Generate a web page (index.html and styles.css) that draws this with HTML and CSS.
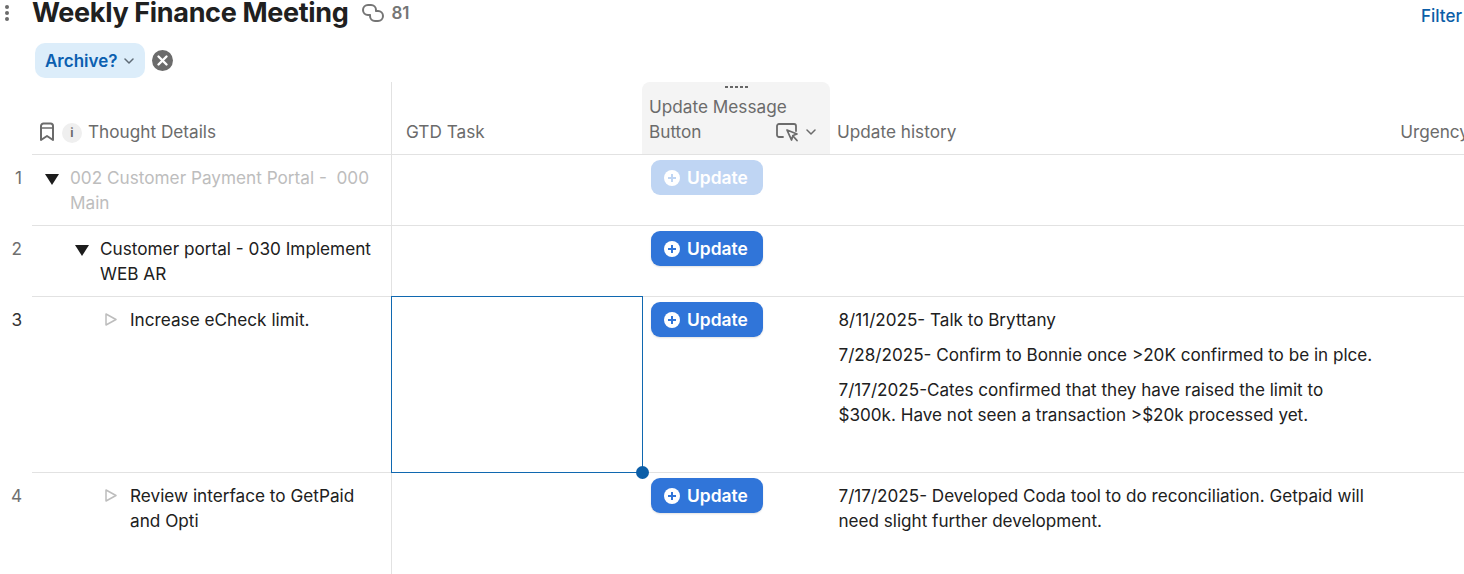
FILE: index.html
```html
<!DOCTYPE html>
<html lang="en">
<head>
<meta charset="utf-8">
<title>Weekly Finance Meeting</title>
<link rel="stylesheet" href="styles.css">
</head>
<body>
<div class="page">
  <header class="title-bar">
    <svg class="dots" width="6" height="20" viewBox="0 0 6 20"><circle cx="3" cy="4" r="2"/><circle cx="3" cy="10" r="2"/><circle cx="3" cy="16" r="2"/></svg>
    <h1 class="title">Weekly Finance Meeting</h1>
    <svg class="link-icon" width="24" height="20" viewBox="0 0 24 20" fill="none" stroke="#757575" stroke-width="2" stroke-linecap="round"><path d="M8.500 12H7a5 5 0 0 1 0-10h3a5 5 0 0 1 5 5v1"/><path d="M15.500 8H17a5 5 0 0 1 0 10h-3a5 5 0 0 1-5-5v-1"/></svg>
    <span class="count">81</span>
    <a class="filter">Filter</a>
  </header>
  <div class="chips">
    <div class="chip">Archive?
      <svg width="10" height="6" viewBox="0 0 10 6" fill="none" stroke="#5f6b76" stroke-width="1.500" stroke-linecap="round" stroke-linejoin="round"><path d="M1 1l4 4 4-4"/></svg>
    </div>
    <svg class="clear" width="21" height="21" viewBox="0 0 21 21"><circle cx="10.500" cy="10.500" r="10.500" fill="#6b6b6b"/><path d="M6.500 6.500l8 8M14.500 6.500l-8 8" stroke="#fff" stroke-width="2.400" stroke-linecap="round"/></svg>
  </div>
  <div class="table">
    <div class="gutter-head"></div>
    <div class="hcell h-first">
      <svg class="bookmark" width="16" height="20" viewBox="0 0 16 20" fill="none" stroke="#6b6b6b" stroke-width="2" stroke-linejoin="round"><path d="M2 4a2.500 2.500 0 0 1 2.500-2.500h7A2.500 2.500 0 0 1 14 4v14l-6-4-6 4z"/><path d="M2 6h12" stroke-width="1.500"/></svg>
      <span class="info">i</span>
      <span>Thought Details</span>
    </div>
    <div class="hcell h-plain">GTD Task</div>
    <div class="hcell h-active">
      <span class="grip"></span>
      <div class="h-active-text">Update Message</div>
      <div class="h-active-row">
        <span>Button</span>
        <span class="h-icons">
          <svg width="24" height="20" viewBox="0 0 24 20" fill="none" stroke="#6b6b6b" stroke-width="1.800" stroke-linejoin="round" stroke-linecap="round"><path d="M7 15H3a2 2 0 0 1-2-2V4a2 2 0 0 1 2-2h15a2 2 0 0 1 2 2v5"/><path d="M11 8l10 4-4 1.500-1.500 4.500z"/><path d="M17 14l4 4.500"/></svg>
          <svg width="10" height="6" viewBox="0 0 10 6" fill="none" stroke="#6b6b6b" stroke-width="1.500" stroke-linecap="round" stroke-linejoin="round"><path d="M1 1l4 4 4-4"/></svg>
        </span>
      </div>
    </div>
    <div class="hcell h-history">Update history<span class="urgency">Urgency</span></div>

    <div class="num">1</div>
    <div class="cell first muted lvl0"><span class="tri"></span><span>002 Customer Payment Portal -&nbsp; 000 Main</span></div>
    <div class="cell"></div>
    <div class="cell btn-cell"><button class="update faded"><svg width="16" height="16" viewBox="0 0 16 16"><circle cx="8" cy="8" r="8" fill="#fff"/><path d="M8 4v8M4 8h8" stroke="#bfd5f3" stroke-width="2"/></svg>Update</button></div>
    <div class="cell wide"></div>

    <div class="num">2</div>
    <div class="cell first lvl1"><span class="tri"></span><span>Customer portal - 030 Implement WEB AR</span></div>
    <div class="cell"></div>
    <div class="cell btn-cell"><button class="update"><svg width="16" height="16" viewBox="0 0 16 16"><circle cx="8" cy="8" r="8" fill="#fff"/><path d="M8 4v8M4 8h8" stroke="#3075d9" stroke-width="2"/></svg>Update</button></div>
    <div class="cell wide"></div>

    <div class="num dark">3</div>
    <div class="cell first lvl2"><svg class="tri-open" width="12" height="13" viewBox="0 0 12 13"><path d="M1 1l10 5.500L1 12z" fill="none" stroke="#bdbdbd" stroke-width="1.500" stroke-linejoin="round"/></svg><span>Increase eCheck limit.</span></div>
    <div class="cell selected"><span class="handle"></span></div>
    <div class="cell btn-cell"><button class="update"><svg width="16" height="16" viewBox="0 0 16 16"><circle cx="8" cy="8" r="8" fill="#fff"/><path d="M8 4v8M4 8h8" stroke="#3075d9" stroke-width="2"/></svg>Update</button></div>
    <div class="cell wide history">
      <p>8/11/2025- Talk to Bryttany</p>
      <p>7/28/2025- Confirm to Bonnie once &gt;20K confirmed to be in plce.</p>
      <p>7/17/2025-Cates confirmed that they have raised the limit to $300k. Have not seen a transaction &gt;$20k processed yet.</p>
    </div>

    <div class="num">4</div>
    <div class="cell first lvl2 last"><svg class="tri-open" width="12" height="13" viewBox="0 0 12 13"><path d="M1 1l10 5.500L1 12z" fill="none" stroke="#bdbdbd" stroke-width="1.500" stroke-linejoin="round"/></svg><span>Review interface to GetPaid and Opti</span></div>
    <div class="cell last"></div>
    <div class="cell btn-cell last"><button class="update"><svg width="16" height="16" viewBox="0 0 16 16"><circle cx="8" cy="8" r="8" fill="#fff"/><path d="M8 4v8M4 8h8" stroke="#3075d9" stroke-width="2"/></svg>Update</button></div>
    <div class="cell wide history last">
      <p>7/17/2025- Developed Coda tool to do reconciliation. Getpaid will need slight further development.</p>
    </div>
  </div>
</div>
</body>
</html>
```
FILE: styles.css
```css
* { box-sizing: border-box; }
html, body { margin: 0; height: 100%; overflow: hidden; background: #fff; }
body { font-family: Inter, "Liberation Sans", sans-serif; font-size: 17.200px; color: #202020; }
.page { width: 1464px; height: 574px; overflow: hidden; }

.title-bar { display: flex; align-items: center; height: 26px; padding-left: 4px; }
.dots { fill: #6b6b6b; flex: none; margin-right: 22px; }
.title { margin: 0; font-size: 27px; line-height: 26px; font-weight: 700; letter-spacing: -0.34px; color: #202020; white-space: nowrap; }
.link-icon { margin-left: 13px; }
.count { margin-left: 6px; font-size: 17px; font-weight: 600; color: #757575; }
.filter { margin-left: auto; margin-right: 2px; padding-top: 6px; color: #0b5ea8; font-size: 17px; font-weight: 500; }

.chips { display: flex; align-items: flex-start; gap: 7px; padding: 17px 0 0 35px; height: 56px; }
.chip { display: flex; align-items: center; gap: 7px; height: 35px; padding: 0 11px 0 10px; background: #dcedfa; border-radius: 10px; color: #0b5fb0; font-weight: 600; font-size: 17px; }
.clear { margin-top: 7px; }

.table { display: grid; grid-template-columns: 32px 360px 250px 188px 1fr; grid-template-rows: 73px 71px 71px 176px 101px; font-size: 17.200px; }
.hcell { display: flex; align-items: flex-end; padding-bottom: 10px; color: #6b6b6b; line-height: 25px; border-bottom: 1px solid #e2e2e2; white-space: nowrap; }
.h-first { border-right: 1px solid #e2e2e2; padding-left: 7px; gap: 6px; }
.bookmark { margin: 0 1px 2px 0; }
.info { width: 20px; height: 20px; margin-bottom: 1px; border-radius: 50%; background: #efefef; color: #6b6b6b; font-size: 12px; font-weight: 700; line-height: 20px; text-align: center; }
.h-plain { padding-left: 14px; }
.h-active { position: relative; display: block; padding: 12px 7px 0; background: #f4f4f4; border-radius: 8px 8px 0 0; }
.grip { position: absolute; top: 4px; left: 83px; width: 23px; height: 2px; background: repeating-linear-gradient(90deg, #666 0 3px, transparent 3px 5px); }
.h-active-row { display: flex; justify-content: space-between; align-items: center; padding-right: 7px; }
.h-icons { display: flex; align-items: center; gap: 6px; }
.h-history { padding-left: 7px; display: flex; justify-content: space-between; }
.urgency { margin-right: -5px; }

.num { padding-top: 10px; padding-right: 10px; text-align: right; color: #6f6f6f; line-height: 25px; }
.num.dark { color: #333; }
.cell { border-bottom: 1px solid #e2e2e2; line-height: 25px; color: #202020; }
.cell.last { border-bottom: 0; }
.first { display: flex; align-items: flex-start; padding-top: 10px; padding-right: 14px; border-right: 1px solid #e2e2e2; }
.lvl0 { padding-left: 13px; }
.lvl1 { padding-left: 43px; }
.lvl2 { padding-left: 73px; }
.muted { color: #bdbdbd; }
.tri { flex: none; width: 0; height: 0; margin: 9px 11px 0 0; border-left: 7px solid transparent; border-right: 7px solid transparent; border-top: 11px solid #1c1c1c; }
.tri-open { flex: none; margin: 6px 13px 0 0; }

.selected { position: relative; margin: -1px -1px 0 -1px; border: 1px solid #1068b0; z-index: 1; }
.handle { position: absolute; right: -7px; bottom: -7px; width: 13px; height: 13px; border-radius: 50%; background: #0b5ea8; }

.btn-cell { padding: 5px 0 0 9px; }
.update { display: inline-flex; align-items: center; gap: 7px; height: 35px; width: 112px; padding: 0 13px; border: 0; border-radius: 9px; background: #3075d9; color: #fff; font: 600 17.400px Inter, "Liberation Sans", sans-serif; box-shadow: 0 1px 2px rgba(0,0,0,.12); }
.update.faded { background: #bfd5f3; box-shadow: none; }

.history { padding: 10px 90px 0 8.500px; font-size: 17.100px; }
.history p { margin: 0 0 10px; }
```
